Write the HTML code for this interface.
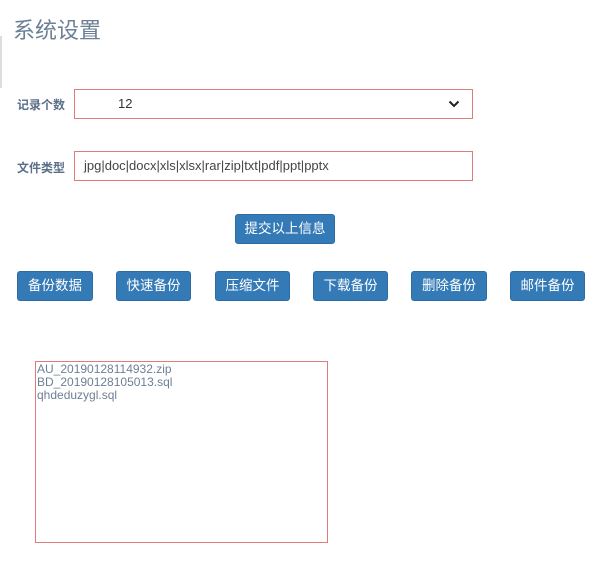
<!DOCTYPE html>
<html><head><meta charset="utf-8"><style>
body{margin:0;width:600px;height:563px;background:#fff;position:relative;overflow:hidden;font-family:"Liberation Sans","Noto Sans CJK SC",sans-serif}
.a{position:absolute}
.t{left:13px;top:13px;font-size:22px;color:#6b7f95}
.vl{left:0;top:36px;width:2px;height:52px;background:#ddd}
.lb{font-size:12px;font-weight:bold;color:#5b6f88;left:17px}
.bx{border:1px solid #e27a7a;box-sizing:border-box;left:74px;width:399px;height:30px}
.btn{background:#337ab7;border:1px solid #2e6da4;border-radius:3px;color:#fff;font-size:13.5px;text-align:center;box-sizing:border-box;height:30px;line-height:28px}
.lst{left:35px;top:361px;width:293px;height:182px;border:1px solid #e27a7a;box-sizing:border-box;font-size:12px;color:#6e8095;line-height:13px;padding:1px 0 0 1px}
</style></head><body>
<div class="a t">系统设置</div>
<div class="a vl"></div>
<div class="a lb" style="top:96px">记录个数</div>
<div class="a bx" style="top:89px"><span class="a" style="left:43px;top:6px;font-size:13px;color:#333">12</span>
<svg class="a" style="left:373px;top:9px" width="12" height="10"><path d="M1.5 2.5 L6 7 L10.5 2.5" stroke="#222" stroke-width="2" fill="none"/></svg></div>
<div class="a lb" style="top:159px">文件类型</div>
<div class="a bx" style="top:151px"><span class="a" style="left:9px;top:6px;font-size:13px;color:#444">jpg|doc|docx|xls|xlsx|rar|zip|txt|pdf|ppt|pptx</span></div>
<div class="a btn" style="left:235px;top:214px;width:100px">提交以上信息</div>
<div class="a btn" style="left:17px;top:271px;width:76px">备份数据</div>
<div class="a btn" style="left:116px;top:271px;width:75px">快速备份</div>
<div class="a btn" style="left:215px;top:271px;width:75px">压缩文件</div>
<div class="a btn" style="left:313px;top:271px;width:75px">下载备份</div>
<div class="a btn" style="left:411px;top:271px;width:76px">删除备份</div>
<div class="a btn" style="left:510px;top:271px;width:75px">邮件备份</div>
<div class="a lst">AU_20190128114932.zip<br>BD_20190128105013.sql<br>qhdeduzygl.sql</div>
</body></html>
